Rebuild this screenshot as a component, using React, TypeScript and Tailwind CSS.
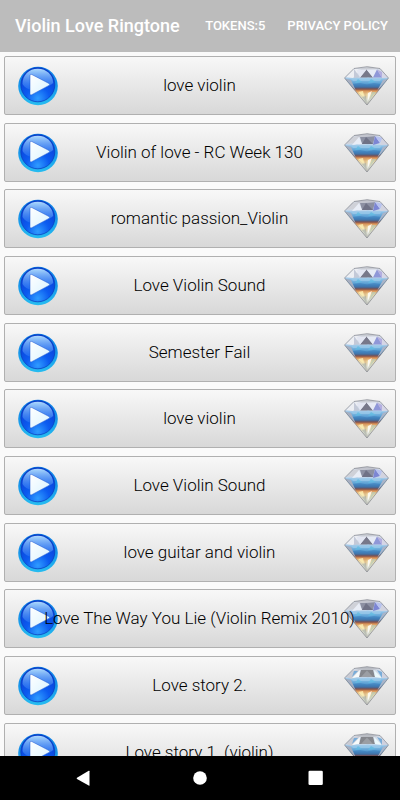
type Cut = "peaks" | "table" | "front";

type Ringtone = {
  id: number;
  title: string;
  cut: Cut;
};

const ringtones: Ringtone[] = [
  { id: 1, title: "love violin", cut: "peaks" },
  { id: 2, title: "Violin of love - RC Week 130", cut: "table" },
  { id: 3, title: "romantic passion_Violin", cut: "table" },
  { id: 4, title: "Love Violin Sound", cut: "peaks" },
  { id: 5, title: "Semester Fail", cut: "peaks" },
  { id: 6, title: "love violin", cut: "peaks" },
  { id: 7, title: "Love Violin Sound", cut: "table" },
  { id: 8, title: "love guitar and violin", cut: "peaks" },
  { id: 9, title: "Love The Way You Lie (Violin Remix 2010)", cut: "table" },
  { id: 10, title: "Love story 2.", cut: "front" },
  { id: 11, title: "Love story 1. (violin)", cut: "front" },
];

// Gradients shared by every row's icons
function IconDefs() {
  return (
    <svg className="absolute h-0 w-0" aria-hidden="true">
      <defs>
        <linearGradient id="ring" x1="0" y1="0" x2="0" y2="1">
          <stop offset="0" stopColor="#0b78e4" />
          <stop offset="0.5" stopColor="#1796ea" />
          <stop offset="1" stopColor="#27bdf0" />
        </linearGradient>
        <radialGradient id="disc" cx="0.5" cy="0.9" r="0.85">
          <stop offset="0" stopColor="#2f9cff" />
          <stop offset="0.4" stopColor="#0c5cf0" />
          <stop offset="1" stopColor="#0a3bd2" />
        </radialGradient>
        <linearGradient id="gloss" x1="0" y1="0" x2="0" y2="1">
          <stop offset="0" stopColor="#b4e2ff" stopOpacity="0.95" />
          <stop offset="1" stopColor="#4a97ff" stopOpacity="0.3" />
        </linearGradient>
        <linearGradient id="arrow" x1="0" y1="0" x2="1" y2="1">
          <stop offset="0" stopColor="#ffffff" />
          <stop offset="1" stopColor="#d9f3ff" />
        </linearGradient>
        <linearGradient id="gem" gradientUnits="userSpaceOnUse" x1="0" y1="0" x2="0" y2="39">
          <stop offset="0" stopColor="#d4d7e0" />
          <stop offset="0.28" stopColor="#cfdcec" />
          <stop offset="0.34" stopColor="#8dc0e6" />
          <stop offset="0.45" stopColor="#5a9fd3" />
          <stop offset="0.54" stopColor="#3d6fa6" />
          <stop offset="0.59" stopColor="#80504c" />
          <stop offset="0.64" stopColor="#dd9354" />
          <stop offset="0.72" stopColor="#eed9a4" />
          <stop offset="0.85" stopColor="#d9dbcd" />
          <stop offset="1" stopColor="#b9bab4" />
        </linearGradient>
      </defs>
    </svg>
  );
}

function PlayIcon() {
  return (
    <svg viewBox="0 0 40 40" className="h-10 w-10 shrink-0" aria-hidden="true">
      <ellipse cx="20" cy="20" rx="19.8" ry="19.200" fill="url(#ring)" />
      <ellipse cx="19.8" cy="18.8" rx="17" ry="17" fill="url(#disc)" stroke="#0a36b8" strokeWidth="0.7" />
      <path
        d="M4.500 18C4.500 9 11 2.800 19.800 2.800S35 9 35.200 17C30 22 25 20 19 22.500C13 25 7 23 4.500 18Z"
        fill="url(#gloss)"
      />
      <path
        d="M12 9.700Q12 7.800 13.800 8.500L31 17.500Q32.300 18.400 31 19.400L13.800 28.700Q12 29.600 12 27.700Z"
        fill="url(#arrow)"
        stroke="#1a55d0"
        strokeWidth="0.5"
      />
    </svg>
  );
}

function Crown({ cut }: { cut: Cut }) {
  if (cut === "peaks") {
    return (
      <>
        <path d="M10 2.500L17 3.500L9 12L2 11Z" fill="#eceef3" />
        <path d="M13 3L25 0.800L33 3L24 4Z" fill="#c9ccd3" />
        <path d="M16 11.500L22.500 3.500L29 11.500Z" fill="#77788a" />
        <path d="M22.500 3.500L29 11.500L33 3.500Z" fill="#e6eaf5" />
        <path d="M16 11.500L12.500 4L22.500 3.500Z" fill="#e3e6f2" />
        <path d="M10 3L16 11.500L10 12Z" fill="#c3c9d8" />
        <path d="M33 3.500L29 11.500L38 11.500Z" fill="#8f97d8" />
        <path d="M33 3.500L40 7L38 12Z" fill="#b4aee0" />
        <path d="M38 5L44 11.500L38 12Z" fill="#d6d6e6" />
      </>
    );
  }
  if (cut === "table") {
    return (
      <>
        <path d="M8 4L16 3L13 10L2 11Z" fill="#cfd1d8" />
        <path d="M16 4L31 3L29 11L18 11Z" fill="#8c90a2" />
        <path d="M10 2.500L24 0.800L34 3L16 4Z" fill="#c2c4cd" />
        <path d="M22 4L29 11L18 11Z" fill="#6f7286" />
        <path d="M15 4L18 11L8 12Z" fill="#e9edf6" />
        <path d="M31 3L36 10L29 12Z" fill="#7c86d4" />
        <path d="M31 3L39 5L36 10Z" fill="#b7c2f0" />
        <path d="M38 5L44 11.500L36 12Z" fill="#d2d3df" />
      </>
    );
  }
  return (
    <>
      <path d="M8 5L16 3L8 13L1.500 11Z" fill="#c9cbd4" />
      <path d="M12 3L23 0.800L34 3L23 4.500Z" fill="#b9bcc3" />
      <path d="M17 4L29 4L31 11L15 11Z" fill="#85878d" />
      <path d="M17 11L23 4.500L29 11Z" fill="#9b9ea4" />
      <path d="M16 4L15 11L8 12Z" fill="#f8fafa" />
      <path d="M30 4L38 12L31 11Z" fill="#eaf8fb" />
      <path d="M10 5L14 5L8 11Z" fill="#79acd8" />
      <path d="M33 4L38 6L38 12Z" fill="#79acd8" />
      <path d="M38 6L44 11.500L38 12Z" fill="#d0d1de" />
    </>
  );
}

function Diamond({ cut }: { cut: Cut }) {
  return (
    <svg viewBox="-3 0 48 40" className="h-10 w-12 shrink-0" aria-hidden="true">
      <path d="M0.500 12L10 2.500L23 0.700L36 2.500L44.500 12L23 39Z" fill="url(#gem)" />
      <Crown cut={cut} />
      <path d="M7 13L13 11.500L19 13L24 11.500L30 13L38 12L36 15L9 15Z" fill="#9ccbea" opacity="0.7" />
      <path d="M14 13L18 16L11 17ZM27 13L32 16L24 17Z" fill="#62bbe2" opacity="0.8" />
      <path d="M9 18L16 17L23 18.500L30 17L37 18L35 20L10 20Z" fill="#3577b8" opacity="0.45" />
      <path d="M1 12.500L7 14L12 25Z" fill="#a6aec0" />
      <path d="M44 12.500L39 14L33 25Z" fill="#a9b4c8" />
      <path d="M14 26L19 25L20 31Z" fill="#fdf0b4" opacity="0.8" />
      <path d="M19.500 26L23 24.500L22 34Z" fill="#cf9a66" opacity="0.4" />
      <path d="M24 27L28 25L23.500 36Z" fill="#ffffff" opacity="0.8" />
      <path d="M28 26L32 26L25.500 34Z" fill="#b7cbb8" opacity="0.7" />
      <path d="M18 31L22 30L22.500 37Z" fill="#a9b0a8" opacity="0.6" />
      <path
        d="M0.500 12L10 2.500L23 0.700L36 2.500L44.500 12L23 39Z"
        fill="none"
        stroke="#74777f"
        strokeWidth="0.6"
      />
    </svg>
  );
}

function RingtoneRow({ tone }: { tone: Ringtone }) {
  return (
    <li className="mb-2 nth-[3n+2]:mb-[7px]">
      <button
        type="button"
        className="flex h-[59px] w-full items-center rounded-xs border border-[#b0b0b0] bg-linear-to-b from-[#f8f8f8] to-[#d8d8d8] pr-1.5 pl-[13px]"
      >
        <PlayIcon />
        <span className="z-10 flex min-w-0 flex-1 justify-center text-[17px] font-light whitespace-nowrap text-black">
          {tone.title}
        </span>
        <Diamond cut={tone.cut} />
      </button>
    </li>
  );
}

export default function App() {
  return (
    <div className="flex h-screen flex-col bg-[#fafafa] font-[Roboto,sans-serif]">
      <IconDefs />
      <header className="flex h-13 shrink-0 items-center bg-[#bcbcbc] pr-3 pl-[15px] text-white">
        <h1 className="flex-1 text-lg font-medium whitespace-nowrap">Violin Love Ringtone</h1>
        <div className="flex gap-[22px] text-[13px] font-medium whitespace-nowrap">
          <button type="button">TOKENS:5</button>
          <button type="button">PRIVACY POLICY</button>
        </div>
      </header>

      <main className="min-h-0 flex-1 overflow-hidden px-1 pt-1">
        <ul>
          {ringtones.map((tone) => (
            <RingtoneRow key={tone.id} tone={tone} />
          ))}
        </ul>
      </main>

      <nav className="flex h-11 shrink-0 items-center justify-center gap-[92px] bg-black">
        <button type="button" aria-label="Back">
          <svg viewBox="0 0 24 24" className="h-6 w-6" fill="#fff">
            <path d="M17.500 5.200V19.200Q17.500 20 16.700 19.600L5 13Q4.200 12.300 5 11.700L16.700 4.800Q17.500 4.400 17.500 5.200Z" />
          </svg>
        </button>
        <button type="button" aria-label="Home">
          <svg viewBox="0 0 24 24" className="h-6 w-6" fill="#fff">
            <circle cx="12" cy="12" r="6.800" />
          </svg>
        </button>
        <button type="button" aria-label="Recent apps">
          <svg viewBox="0 0 24 24" className="h-6 w-6" fill="#fff">
            <rect x="4.500" y="4.700" width="14.300" height="14.300" rx="1.300" />
          </svg>
        </button>
      </nav>
    </div>
  );
}
